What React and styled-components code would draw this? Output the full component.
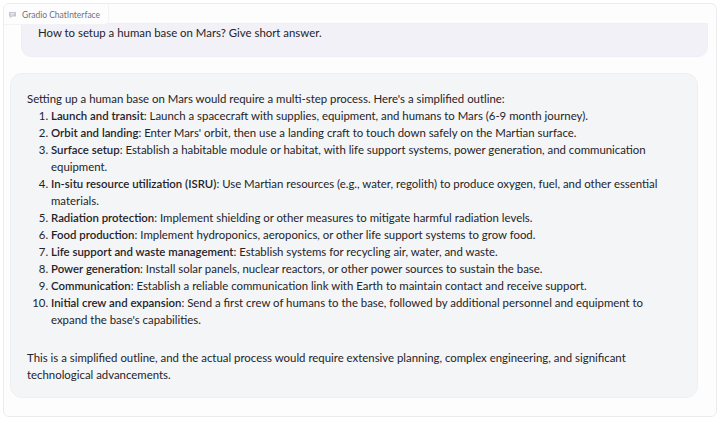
import React from 'react'
import styled, { createGlobalStyle } from 'styled-components'

const GlobalStyle = createGlobalStyle`
html, body {
    margin: 0;
    padding: 0;
    background: #ffffff;
}
body {
    font-family: Lato, 'Liberation Sans', sans-serif;
    color: #242428;
}
`

const Page = styled.div`
width: 720px;
height: 421px;
padding: 3px 3px 4px 3px;
box-sizing: border-box;
`

const Panel = styled.div`
position: relative;
height: 100%;
box-sizing: border-box;
border: 1px solid #ececef;
border-radius: 6px;
background: #fdfdfd;
display: flex;
flex-direction: column;
overflow: hidden;
`

const Label = styled.div`
position: absolute;
top: 0;
left: 0;
display: flex;
align-items: center;
gap: 5px;
padding: 6px 8px 4px 4px;
font-size: 8.5px;
color: #6b7280;
background: #fdfdfd;
border-right: 1px solid #f3f3f5;
border-bottom: 1px solid #f3f3f5;
border-bottom-right-radius: 5px;
z-index: 1;
`

const Messages = styled.div`
flex: 1;
display: flex;
flex-direction: column;
gap: 16px;
padding: 19px 8px 0 6px;
overflow: hidden;
`

const Bubble = styled.div`
box-sizing: border-box;
font-size: 11.4px;
line-height: 17px;
border-radius: ${p => (p.user ? '0 0 10px 10px' : '12px')};
background: ${p => (p.user ? '#f2f1f8' : '#f4f5f7')};
border: 1px solid ${p => (p.user ? '#efeef6' : '#eeeff2')};
align-self: ${p => (p.user ? 'flex-end' : 'flex-start')};
width: ${p => (p.user ? '687px' : '688px')};
padding: ${p => (p.user ? '0 16px 15px 16px' : '16px 9px 14px 16px')};
margin-right: ${p => (p.user ? '0' : '10px')};

p {
    margin: 0;
}

b {
    font-weight: 600;
}
`

const List = styled.ol`
margin: 0 0 21px 0;
padding-left: 24px;
`

const ChatIcon = () => (
    <svg width="9" height="8" viewBox="0 0 9 8" fill="none">
        <path d="M1 1h7v4.5H4L2 7V5.5H1z" fill="#c4c7cf" />
        <path d="M2.5 2.6h4M2.5 4h3" stroke="#fdfdfd" strokeWidth="0.7" />
    </svg>
)

const steps = [
    ['Launch and transit', 'Launch a spacecraft with supplies, equipment, and humans to Mars (6-9 month journey).'],
    ['Orbit and landing', "Enter Mars' orbit, then use a landing craft to touch down safely on the Martian surface."],
    ['Surface setup', 'Establish a habitable module or habitat, with life support systems, power generation, and communication equipment.'],
    ['In-situ resource utilization (ISRU)', 'Use Martian resources (e.g., water, regolith) to produce oxygen, fuel, and other essential materials.'],
    ['Radiation protection', 'Implement shielding or other measures to mitigate harmful radiation levels.'],
    ['Food production', 'Implement hydroponics, aeroponics, or other life support systems to grow food.'],
    ['Life support and waste management', 'Establish systems for recycling air, water, and waste.'],
    ['Power generation', 'Install solar panels, nuclear reactors, or other power sources to sustain the base.'],
    ['Communication', 'Establish a reliable communication link with Earth to maintain contact and receive support.'],
    ['Initial crew and expansion', 'Send a first crew of humans to the base, followed by additional personnel and equipment to', "expand the base's capabilities."],
]

const App = () => {
    return (
        <Page>
            <GlobalStyle />
            <Panel>
                <Label>
                    <ChatIcon />
                    <span>Gradio ChatInterface</span>
                </Label>
                <Messages>
                    <Bubble user>
                        <p>How to setup a human base on Mars? Give short answer.</p>
                    </Bubble>
                    <Bubble>
                        <p>Setting up a human base on Mars would require a multi-step process. Here's a simplified outline:</p>
                        <List>
                            {steps.map(([title, text, rest]) => (
                                <li key={title}>
                                    <b>{title}</b>: {text}
                                    {rest && <><br />{rest}</>}
                                </li>
                            ))}
                        </List>
                        <p>This is a simplified outline, and the actual process would require extensive planning, complex engineering, and significant technological advancements.</p>
                    </Bubble>
                </Messages>
            </Panel>
        </Page>
    )
}

export default App
